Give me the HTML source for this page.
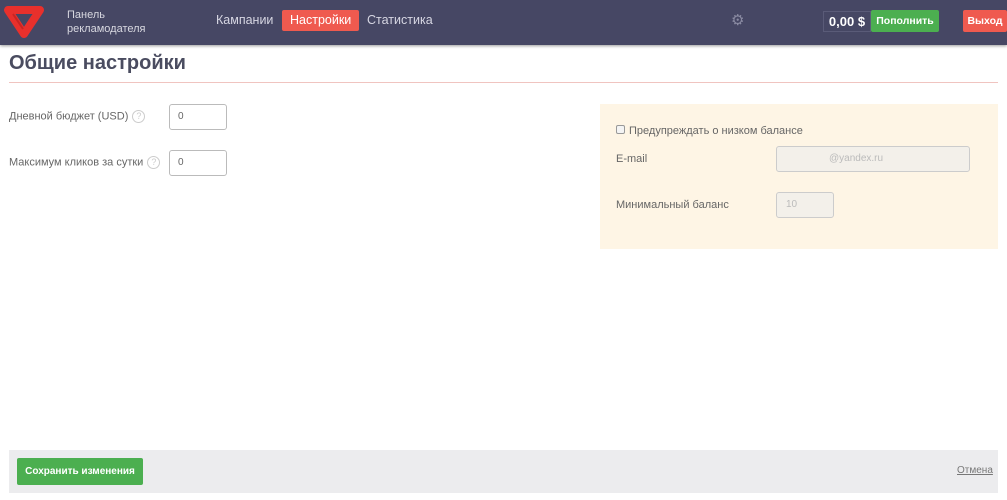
<!DOCTYPE html>
<html><head><meta charset="utf-8"><style>
*{box-sizing:border-box;margin:0;padding:0}
body{width:1007px;height:500px;background:#fff;font-family:"Liberation Sans","DejaVu Sans",sans-serif;position:relative;overflow:hidden;color:#555}
.top{position:absolute;left:0;top:0;width:1007px;height:45px;background:#464764;box-shadow:0 1px 3px rgba(0,0,0,.4)}
.abs{position:absolute}
.brand{left:67px;top:8px;font-size:11px;line-height:14px;color:#d8d8e0}
.nav{top:10px;height:21px;line-height:21px;font-size:12.5px;color:#d6d6e2;padding:0 8px;border-radius:2px}
.act{background:#ef5a4f;color:#fff}
.bal{left:823px;top:11px;width:48px;height:21px;border:1px solid #5a5b78;color:#fff;font-weight:bold;font-size:13px;line-height:19px;text-align:center}
.btn{color:#fff;font-size:10.5px;font-weight:bold;text-align:center;border-radius:2px}
h1{position:absolute;left:9px;top:52px;font-size:20px;color:#4a4c60;font-weight:bold}
.hr{left:9px;top:82px;width:989px;height:1px;background:#f0c4c0}
.lbl{font-size:11px;color:#666}
.inp{border:1px solid #bbb;border-radius:3px;font-size:10px;color:#666;padding-left:8px;background:#fff}
.q{display:inline-block;width:13px;height:13px;border:1px solid #ccc;border-radius:50%;font-size:9px;line-height:11px;text-align:center;color:#ccc;margin-left:4px;vertical-align:middle}
.panel{left:600px;top:104px;width:398px;height:145px;background:#fef5e5}
.dis{border:1px solid #ccc;border-radius:3px;background:#f3f0ea;font-size:10px;color:#bbb}
.foot{left:9px;top:450px;width:989px;height:43px;background:#ececee}
</style></head><body>
<div class="top">
<svg class="abs" style="left:3px;top:5px" width="42" height="34" viewBox="0 0 42 34"><path d="M5 5 L37 5 L21 29 Z" fill="none" stroke="#e8302c" stroke-width="8" stroke-linejoin="round"/><path d="M10 9 L20 24" stroke="#b51e1c" stroke-width="2" opacity=".6"/></svg>
<div class="abs brand">Панель<br>рекламодателя</div>
<div class="abs nav" style="left:208px">Кампании</div>
<div class="abs nav act" style="left:282px">Настройки</div>
<div class="abs nav" style="left:359px">Статистика</div>
<div class="abs" style="left:731px;top:13px;font-size:15px;color:#8a8ba2;line-height:15px">⚙</div>
<div class="abs bal">0,00 $</div>
<div class="abs btn" style="left:871px;top:10px;width:68px;height:22px;line-height:22px;background:#4caf50">Пополнить</div>
<div class="abs btn" style="left:963px;top:10px;width:44px;height:22px;line-height:22px;background:#ef5a4f">Выход</div>
</div>
<h1>Общие настройки</h1>
<div class="abs hr"></div>
<div class="abs lbl" style="left:9px;top:110px">Дневной бюджет (USD)<span class="q">?</span></div>
<div class="abs inp" style="left:169px;top:104px;width:58px;height:26px;line-height:24px">0</div>
<div class="abs lbl" style="left:9px;top:156px">Максимум кликов за сутки<span class="q">?</span></div>
<div class="abs inp" style="left:169px;top:150px;width:58px;height:26px;line-height:24px">0</div>
<div class="abs panel"></div>
<div class="abs" style="left:616px;top:125px;width:9px;height:9px;border:1px solid #999;border-radius:2px;background:#f4f4f4"></div>
<div class="abs lbl" style="left:629px;top:125px">Предупреждать о низком балансе</div>
<div class="abs lbl" style="left:616px;top:153px">E-mail</div>
<div class="abs dis" style="left:776px;top:146px;width:194px;height:26px;line-height:24px;padding-left:52px">@yandex.ru</div>
<div class="abs lbl" style="left:616px;top:199px">Минимальный баланс</div>
<div class="abs dis" style="left:776px;top:192px;width:58px;height:26px;line-height:24px;padding-left:9px">10</div>
<div class="abs foot"></div>
<div class="abs btn" style="left:17px;top:458px;width:126px;height:27px;line-height:27px;background:#4caf50;font-size:10px">Сохранить изменения</div>
<div class="abs" style="left:957px;top:465px;font-size:10px;color:#777;text-decoration:underline">Отмена</div>
</body></html>
